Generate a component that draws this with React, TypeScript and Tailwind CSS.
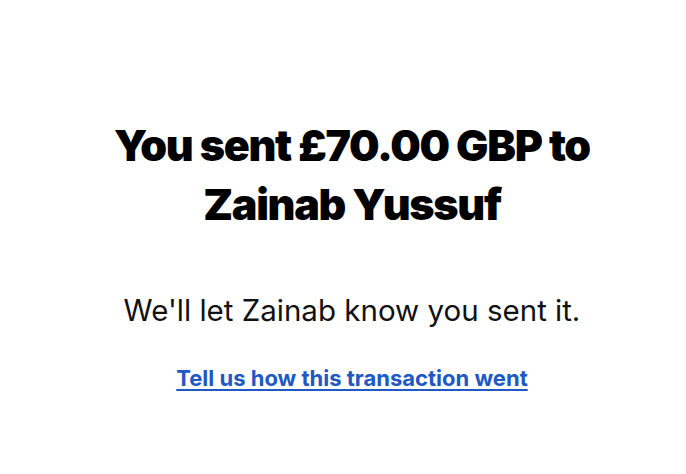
import React from "react";

export default function App() {
  return (
    <div className="min-h-screen w-full bg-white flex flex-col items-center text-center pt-[116px] pl-[18px]">
      <h1 className="font-['Inter',sans-serif] text-[43px] leading-[59px] font-black tracking-[-0.03em] text-black">
        You sent £70.00 GBP to
        <br />
        Zainab Yussuf
      </h1>
      <p className="mt-[58px] font-['Inter',sans-serif] text-[29.5px] leading-[36px] text-[#111]">
        We'll let Zainab know you sent it.
      </p>
      <a
        href="#"
        className="mt-[36px] font-['Inter',sans-serif] text-[22px] leading-[28px] font-bold text-[#2058c4] underline underline-offset-[3px]"
      >
        Tell us how this transaction went
      </a>
    </div>
  );
}
